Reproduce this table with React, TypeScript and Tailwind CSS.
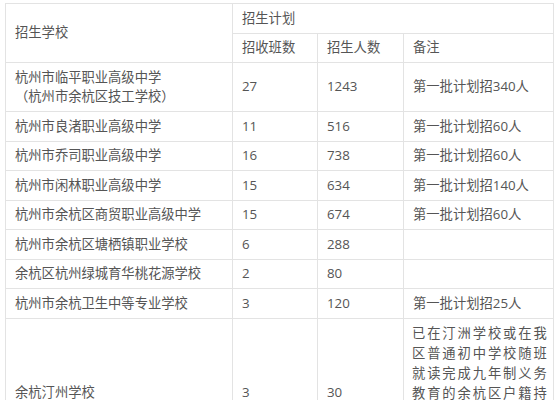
import React from "react";

const rows: { name: React.ReactNode; classes: string; people: string; note: string }[] = [
  { name: <>杭州市临平职业高级中学<br />（杭州市余杭区技工学校）</>, classes: "27", people: "1243", note: "第一批计划招340人" },
  { name: "杭州市良渚职业高级中学", classes: "11", people: "516", note: "第一批计划招60人" },
  { name: "杭州市乔司职业高级中学", classes: "16", people: "738", note: "第一批计划招60人" },
  { name: "杭州市闲林职业高级中学", classes: "15", people: "634", note: "第一批计划招140人" },
  { name: "杭州市余杭区商贸职业高级中学", classes: "15", people: "674", note: "第一批计划招60人" },
  { name: "杭州市余杭区塘栖镇职业学校", classes: "6", people: "288", note: "" },
  { name: "余杭区杭州绿城育华桃花源学校", classes: "2", people: "80", note: "" },
  { name: "杭州市余杭卫生中等专业学校", classes: "3", people: "120", note: "第一批计划招25人" },
];

const td = "border border-[#e3e3e3] px-[9px] py-[4.5px] align-middle";

export default function App() {
  return (
    <div
      className="w-[558px] h-[400px] overflow-hidden bg-white pl-[5px] pt-[3px] text-[#555] text-[13.3px] leading-[19.5px]"
      style={{ fontFamily: '"Open Sans", "Noto Sans CJK SC", sans-serif' }}
    >
      <table className="border-collapse table-fixed w-[548px]">
        <colgroup>
          <col className="w-[227px]" />
          <col className="w-[85px]" />
          <col className="w-[86px]" />
          <col className="w-[150px]" />
        </colgroup>
        <tbody>
          <tr>
            <td rowSpan={2} className={td}>招生学校</td>
            <td colSpan={3} className={td}>招生计划</td>
          </tr>
          <tr>
            <td className={td}>招收班数</td>
            <td className={td}>招生人数</td>
            <td className={td}>备注</td>
          </tr>
          {rows.map((r, i) => (
            <tr key={i}>
              <td className={td}>{r.name}</td>
              <td className={td}>{r.classes}</td>
              <td className={td}>{r.people}</td>
              <td className={td}>{r.note}</td>
            </tr>
          ))}
          <tr>
            <td className={td}>余杭汀州学校</td>
            <td className={td}>3</td>
            <td className={td}>30</td>
            <td className="border border-[#e3e3e3] pl-[8px] pr-[5px] pt-[4px] pb-[4.5px] align-middle leading-[20px] tracking-[1.2px] text-justify">
              已在汀洲学校或在我区普通初中学校随班就读完成九年制义务教育的余杭区户籍持证残疾学生，面向全区招收培智职业高中班学生。
            </td>
          </tr>
        </tbody>
      </table>
    </div>
  );
}
